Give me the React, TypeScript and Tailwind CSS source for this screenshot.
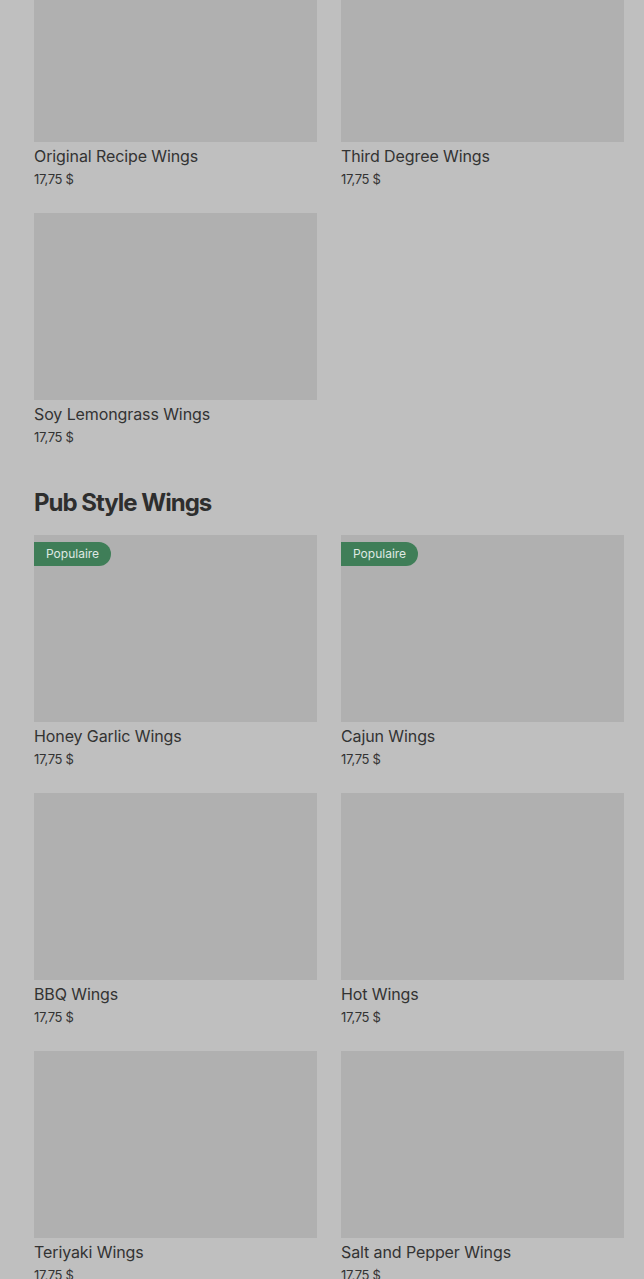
type Item = { name: string; popular?: boolean };

const topItems: Item[] = [
  { name: "Original Recipe Wings" },
  { name: "Third Degree Wings" },
  { name: "Soy Lemongrass Wings" },
];

const pubItems: Item[] = [
  { name: "Honey Garlic Wings", popular: true },
  { name: "Cajun Wings", popular: true },
  { name: "BBQ Wings" },
  { name: "Hot Wings" },
  { name: "Teriyaki Wings" },
  { name: "Salt and Pepper Wings" },
];

function Card({ item }: { item: Item }) {
  return (
    <div className="flex flex-col">
      <div className="relative h-[187px] bg-[#b0b0b0]">
        {item.popular && (
          <span className="absolute left-0 top-[7px] flex h-[24px] items-center rounded-r-full bg-[#3f7e58] pl-[12px] pr-[12px] text-[12px] text-[#dfe9e2]">
            Populaire
          </span>
        )}
      </div>
      <div className="mt-[3px] h-[22px] text-[16px] leading-[22px] tracking-[-0.1px] text-[#333333]">{item.name}</div>
      <div className="mt-[3px] h-[18px] text-[13px] leading-[18px] tracking-[-0.3px] text-[#333333]">17,75 $</div>
    </div>
  );
}

export default function App() {
  return (
    <main
      className="min-h-screen overflow-hidden bg-[#bfbfbf] pl-[34px] pr-[20px]"
      style={{ fontFamily: "Inter, 'Liberation Sans', sans-serif" }}
    >
      <div className="-mt-[45px] grid grid-cols-2 gap-x-[24px] gap-y-[25px]">
        {topItems.map((it) => (
          <Card key={it.name} item={it} />
        ))}
      </div>

      <h2 className="mt-[41px] h-[32px] text-[24px] font-bold leading-[32px] tracking-[-1px] text-[#2e2e2e]">
        Pub Style Wings
      </h2>

      <div className="mt-[16px] grid grid-cols-2 gap-x-[24px] gap-y-[25px]">
        {pubItems.map((it) => (
          <Card key={it.name} item={it} />
        ))}
      </div>
    </main>
  );
}
